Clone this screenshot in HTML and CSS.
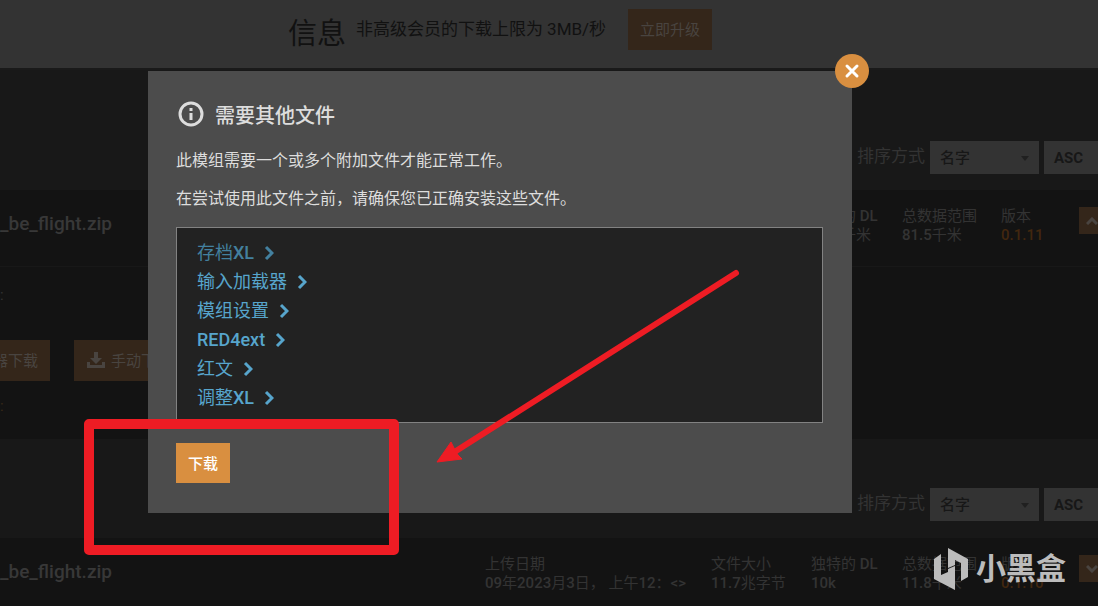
FILE: index.html
```html
<!DOCTYPE html>
<html lang="zh-CN">

<head>
  <meta charset="UTF-8" />
  <meta name="viewport" content="width=device-width, initial-scale=1.0" />
  <title>需要其他文件</title>
  <link rel="stylesheet" href="styles.css">
</head>

<body>
  <header class="notice">
    <h1>信息</h1>
    <p>非高级会员的下载上限为 3MB/秒</p>
    <button type="button" class="btn-dim">立即升级</button>
  </header>

  <main class="files">
    <div class="sort-bar">
      <label for="sort1">排序方式</label>
      <div class="select-wrap"><select id="sort1"><option>名字</option></select></div>
      <button type="button" class="order">ASC</button>
    </div>
    <section class="file-row">
      <h2>_be_flight.zip</h2>
      <dl class="stats">
        <div class="date"><dt>上传日期</dt><dd></dd></div>
        <div class="size"><dt>文件大小</dt><dd></dd></div>
        <div class="unique"><dt>独特的 <b>DL</b></dt><dd class="unit">千米</dd></div>
        <div class="total"><dt>总数据范围</dt><dd><b>81.5</b>千米</dd></div>
        <div class="version"><dt>版本</dt><dd><b>0.1.11</b></dd></div>
      </dl>
      <button type="button" class="toggle" aria-label="收起">
        <svg viewBox="0 0 12 8" width="12" height="8"><path d="M1 7l5-5 5 5" /></svg>
      </button>
    </section>
    <section class="file-body">
      <p class="about"><span>:</span></p>
      <div class="downloads">
        <button type="button" class="btn-dim manager"><span>器下载</span></button>
        <button type="button" class="btn-dim manual">
          <svg viewBox="0 0 20 18" width="20" height="18"><path d="M8 1h4v6h4l-6 6-6-6h4z" /><path d="M1 11h3v3h12v-3h3v6H1z" /></svg>
          手动下载
        </button>
      </div>
      <p class="preview"><span>:</span></p>
    </section>

    <div class="sort-bar second">
      <label for="sort2">排序方式</label>
      <div class="select-wrap"><select id="sort2"><option>名字</option></select></div>
      <button type="button" class="order">ASC</button>
    </div>
    <section class="file-row">
      <h2>_be_flight.zip</h2>
      <dl class="stats">
        <div class="date"><dt>上传日期</dt><dd><b>09</b>年<b>2023</b>月<b>3</b>日， 上午<b>12</b>：<b>&lt;&gt;</b></dd></div>
        <div class="size"><dt>文件大小</dt><dd><b>11.7</b>兆字节</dd></div>
        <div class="unique"><dt>独特的 <b>DL</b></dt><dd><b>10k</b></dd></div>
        <div class="total"><dt>总数据范围</dt><dd><b>11.8</b>千米</dd></div>
        <div class="version"><dt>版本</dt><dd><b>0.1.10</b></dd></div>
      </dl>
      <button type="button" class="toggle" aria-label="展开">
        <svg viewBox="0 0 12 8" width="12" height="8"><path d="M1 1l5 5 5-5" /></svg>
      </button>
    </section>
  </main>

  <div class="modal" role="dialog" aria-labelledby="modalTitle">
    <button type="button" class="close" aria-label="关闭">
      <svg viewBox="0 0 16 16" width="16" height="16"><path d="M3 3l10 10M13 3L3 13" /></svg>
    </button>
    <div class="modal-head">
      <svg viewBox="0 0 26 26" width="26" height="26">
        <circle cx="13" cy="13" r="11" />
        <path d="M13 7v3M13 12v7" />
      </svg>
      <h2 id="modalTitle">需要其他文件</h2>
    </div>
    <p>此模组需要一个或多个附加文件才能正常工作。</p>
    <p>在尝试使用此文件之前，请确保您已正确安装这些文件。</p>
    <ul class="requirements">
      <li><a href="#" class="visited"><span>存档<b>XL</b></span> <svg viewBox="0 0 10 16" width="10" height="16"><path d="M2 2l6 6-6 6" /></svg></a></li>
      <li><a href="#"><span>输入加载器</span> <svg viewBox="0 0 10 16" width="10" height="16"><path d="M2 2l6 6-6 6" /></svg></a></li>
      <li><a href="#"><span>模组设置</span> <svg viewBox="0 0 10 16" width="10" height="16"><path d="M2 2l6 6-6 6" /></svg></a></li>
      <li><a href="#"><b>RED4ext</b> <svg viewBox="0 0 10 16" width="10" height="16"><path d="M2 2l6 6-6 6" /></svg></a></li>
      <li><a href="#"><span>红文</span> <svg viewBox="0 0 10 16" width="10" height="16"><path d="M2 2l6 6-6 6" /></svg></a></li>
      <li><a href="#"><span>调整<b>XL</b></span> <svg viewBox="0 0 10 16" width="10" height="16"><path d="M2 2l6 6-6 6" /></svg></a></li>
    </ul>
    <button type="button" class="download">下载</button>
  </div>

  <!-- red marker box and arrow -->
  <svg class="marks" viewBox="0 0 660 290" width="660" height="290">
    <rect x="9" y="157" width="305" height="126" />
    <path class="shaft" d="M656 6 376 184" />
    <path class="head" d="M357 195l14-20 4 8 3 5 4 4z" />
  </svg>

  <div class="brand">
    <svg viewBox="0 0 36 42" width="36" height="42">
      <path d="M1 11l7-5v21l7-3v-3l7-3v24L1 31z" />
      <path d="M15 0l20 11v18l-7 4V15l-6-3v5l-7 3z" />
    </svg>
    <span>小黑盒</span>
  </div>
</body>

</html>
```

FILE: styles.css
```css
* {
  box-sizing: border-box;
}

body {
  margin: 0;
  min-height: 100vh;
  position: relative;
  overflow: hidden;
  background: #131313;
  color: #333;
  font-family: Roboto, "Noto Sans CJK SC", sans-serif;
  font-size: 15px;
}

h1, h2, p, ul, dl, dd {
  margin: 0;
  padding: 0;
}

b {
  font-weight: 500;
}

button, select {
  border: 0;
  border-radius: 0;
  font-family: inherit;
}

.notice {
  display: flex;
  justify-content: center;
  align-items: flex-start;
  height: 70px;
  padding-right: 98px;
  background: #333;
  border-bottom: 2px solid #1a1a1a;
  color: #111;
}

.notice h1 {
  padding-top: 13px;
  font-size: 29px;
  font-weight: 400;
  line-height: 42px;
}

.notice p {
  padding: 16px 22px 0 10px;
  font-size: 17px;
  line-height: 26px;
}

.btn-dim {
  height: 41px;
  padding: 0 12px 2px;
  background: #34261a;
  color: #494440;
  font-size: 15px;
}

.notice .btn-dim {
  margin-top: 9px;
}

.sort-bar {
  display: flex;
  justify-content: flex-end;
  height: 120px;
  padding-top: 71px;
  background: #181818;
}

.sort-bar.second {
  height: 99px;
  padding-top: 49px;
}

.sort-bar label {
  padding-right: 5px;
  color: #333;
  font-size: 17px;
  line-height: 30px;
}

.select-wrap {
  position: relative;
  width: 109px;
  height: 33px;
}

.select-wrap::after {
  content: "";
  position: absolute;
  right: 10px;
  top: 15px;
  border: 4px solid transparent;
  border-top: 5px solid #202020;
}

.select-wrap select {
  appearance: none;
  width: 100%;
  height: 100%;
  padding: 0 10px;
  background: #333;
  color: #171717;
  font-size: 15px;
  font-weight: 500;
}

.order {
  width: 54px;
  height: 33px;
  margin-left: 5px;
  padding: 0 0 0 10px;
  background: #333;
  color: #171717;
  font-size: 15px;
  font-weight: 700;
  text-align: left;
}

.file-row {
  display: flex;
  justify-content: space-between;
  height: 77px;
  padding-top: 17px;
  background: #131313;
  border-bottom: 1px solid #181818;
}

.file-row h2 {
  color: #383838;
  font-size: 19px;
  font-weight: 500;
  line-height: 34px;
}

.stats {
  display: flex;
  margin-left: auto;
  line-height: 19px;
}

.date {
  width: 226px;
}

.size {
  width: 100px;
}

.unique {
  width: 91px;
}

.unit {
  padding-left: 30px;
}

.total {
  width: 99px;
}

.version {
  width: 78px;
}

.version dd {
  color: #42270f;
}

.toggle {
  width: 19px;
  height: 27px;
  padding: 0 0 0 7px;
  background: #34261a;
  overflow: hidden;
}

.toggle svg {
  fill: none;
  stroke: #494440;
  stroke-width: 3;
}

.file-body {
  height: 172px;
  padding-top: 16px;
}

.about, .preview {
  line-height: 24px;
}

.preview {
  padding-top: 13px;
  color: #3a2a18;
}

.downloads {
  display: flex;
  gap: 24px;
  padding-top: 33px;
}

.manager {
  display: flex;
  justify-content: flex-end;
  align-items: center;
  width: 50px;
  overflow: hidden;
  white-space: nowrap;
}

.manual {
  display: flex;
  align-items: center;
  gap: 5px;
}

.manual svg {
  fill: #494440;
}

.modal {
  position: absolute;
  top: 71px;
  left: 148px;
  right: 246px;
  padding: 28px 29px 30px 28px;
  background: #4c4c4c;
  color: #ddd;
}

.close {
  position: absolute;
  top: -17px;
  right: -17px;
  display: flex;
  justify-content: center;
  align-items: center;
  width: 34px;
  height: 34px;
  padding: 0;
  border-radius: 50%;
  background: #d98f40;
}

.close svg {
  fill: none;
  stroke: #fff;
  stroke-width: 3;
  stroke-linecap: round;
}

.modal-head {
  display: flex;
  align-items: center;
  gap: 11px;
  height: 30px;
  margin-bottom: 13px;
  padding-left: 2px;
}

.modal-head svg {
  fill: none;
  stroke: #ddd;
  stroke-width: 3;
}

.modal-head h2 {
  font-size: 20px;
  font-weight: 500;
}

.modal p {
  padding: 6px 0;
  font-size: 16px;
  line-height: 26px;
}

.requirements {
  height: 196px;
  margin: 9px 0 20px;
  padding: 10px 20px;
  background: #222;
  border: 1px solid #828282;
  list-style: none;
  font-size: 18px;
  line-height: 29px;
}

.requirements a {
  display: flex;
  align-items: center;
  gap: 10px;
  color: #57a5cc;
  text-decoration: none;
}

.requirements svg {
  fill: none;
  stroke: currentColor;
  stroke-width: 3;
}

.requirements .visited {
  color: #43809f;
}

.download {
  display: block;
  height: 40px;
  padding: 0 12px 2px;
  background: #d98f40;
  color: #fff;
  font-size: 15px;
  font-weight: 500;
}

.marks {
  position: absolute;
  top: 267px;
  left: 80px;
  fill: none;
  stroke: #ee1c24;
  pointer-events: none;
}

.marks rect {
  stroke-width: 10;
  stroke-linejoin: round;
}

.marks .shaft {
  stroke-width: 6;
  stroke-linecap: round;
}

.marks .head {
  fill: #ee1c24;
}

.brand {
  position: absolute;
  top: 548px;
  right: 32px;
  display: flex;
  align-items: center;
  gap: 7px;
  color: #bcbcbc;
  font-size: 30px;
  font-weight: 700;
  line-height: 42px;
}

.brand svg {
  fill: #bcbcbc;
}
```
